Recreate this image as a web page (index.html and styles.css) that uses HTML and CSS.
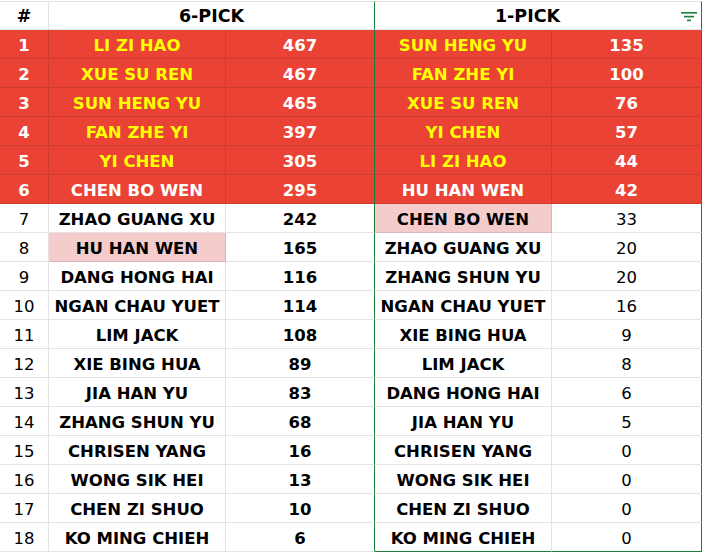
FILE: index.html
```html
<!DOCTYPE html>
<html>
<head>
<meta charset="utf-8">
<link rel="stylesheet" href="styles.css">
</head>
<body>
<div class="sheet">
  <div class="c hd top num">#</div>
  <div class="c hd top span g-right">6-PICK</div>
  <div class="c hd top span g-right pickhd">1-PICK
    <svg class="filter" width="16" height="10" viewBox="0 0 16 10"><rect x="0" y="0" width="16" height="1.6" fill="#188038"/><rect x="3" y="3.8" width="10" height="1.6" fill="#188038"/><rect x="6" y="7.6" width="4" height="1.6" fill="#188038"/></svg>
  </div>

  <div class="c red b num">1</div><div class="c red b y">LI ZI HAO</div><div class="c red b g-right">467</div><div class="c red b y">SUN HENG YU</div><div class="c red b g-right">135</div>
  <div class="c red b num">2</div><div class="c red b y">XUE SU REN</div><div class="c red b g-right">467</div><div class="c red b y">FAN ZHE YI</div><div class="c red b g-right">100</div>
  <div class="c red b num">3</div><div class="c red b y">SUN HENG YU</div><div class="c red b g-right">465</div><div class="c red b y">XUE SU REN</div><div class="c red b g-right">76</div>
  <div class="c red b num">4</div><div class="c red b y">FAN ZHE YI</div><div class="c red b g-right">397</div><div class="c red b y">YI CHEN</div><div class="c red b g-right">57</div>
  <div class="c red b num">5</div><div class="c red b y">YI CHEN</div><div class="c red b g-right">305</div><div class="c red b y">LI ZI HAO</div><div class="c red b g-right">44</div>
  <div class="c red b num">6</div><div class="c red b">CHEN BO WEN</div><div class="c red b g-right">295</div><div class="c red b">HU HAN WEN</div><div class="c red b g-right">42</div>

  <div class="c num">7</div><div class="c b">ZHAO GUANG XU</div><div class="c b g-right">242</div><div class="c b pink">CHEN BO WEN</div><div class="c g-right">33</div>
  <div class="c num">8</div><div class="c b pink">HU HAN WEN</div><div class="c b g-right">165</div><div class="c b">ZHAO GUANG XU</div><div class="c g-right">20</div>
  <div class="c num">9</div><div class="c b">DANG HONG HAI</div><div class="c b g-right">116</div><div class="c b">ZHANG SHUN YU</div><div class="c g-right">20</div>
  <div class="c num">10</div><div class="c b">NGAN CHAU YUET</div><div class="c b g-right">114</div><div class="c b">NGAN CHAU YUET</div><div class="c g-right">16</div>
  <div class="c num">11</div><div class="c b">LIM JACK</div><div class="c b g-right">108</div><div class="c b">XIE BING HUA</div><div class="c g-right">9</div>
  <div class="c num">12</div><div class="c b">XIE BING HUA</div><div class="c b g-right">89</div><div class="c b">LIM JACK</div><div class="c g-right">8</div>
  <div class="c num">13</div><div class="c b">JIA HAN YU</div><div class="c b g-right">83</div><div class="c b">DANG HONG HAI</div><div class="c g-right">6</div>
  <div class="c num">14</div><div class="c b">ZHANG SHUN YU</div><div class="c b g-right">68</div><div class="c b">JIA HAN YU</div><div class="c g-right">5</div>
  <div class="c num">15</div><div class="c b">CHRISEN YANG</div><div class="c b g-right">16</div><div class="c b">CHRISEN YANG</div><div class="c g-right">0</div>
  <div class="c num">16</div><div class="c b">WONG SIK HEI</div><div class="c b g-right">13</div><div class="c b">WONG SIK HEI</div><div class="c g-right">0</div>
  <div class="c num">17</div><div class="c b">CHEN ZI SHUO</div><div class="c b g-right">10</div><div class="c b">CHEN ZI SHUO</div><div class="c g-right">0</div>
  <div class="c num">18</div><div class="c b">KO MING CHIEH</div><div class="c b g-right">6</div><div class="c b g-bottom">KO MING CHIEH</div><div class="c g-right g-bottom">0</div>
</div>
</body>
</html>
```

FILE: styles.css
```css
html, body {
  margin: 0;
  padding: 0;
  background: #ffffff;
}

.sheet {
  margin-top: 1px;
  width: 702px;
  display: grid;
  grid-template-columns: 49px 177px 149px 177px 150px;
  grid-auto-rows: 29px;
  font-family: "DejaVu Sans", sans-serif;
  font-size: 16.5px;
  color: #000;
}

.c {
  box-sizing: border-box;
  border-right: 1px solid rgba(0, 0, 0, 0.11);
  border-bottom: 1px solid rgba(0, 0, 0, 0.11);
  display: flex;
  align-items: center;
  justify-content: center;
  padding-top: 2px;
  white-space: nowrap;
  overflow: hidden;
}

.top {
  border-top: 1px solid rgba(0, 0, 0, 0.11);
}

.hd {
  font-weight: bold;
  font-size: 17.5px;
  padding-top: 0;
}

.span {
  grid-column: span 2;
}

.pickhd {
  position: relative;
  padding-right: 21px;
}

.filter {
  position: absolute;
  right: 4px;
  top: 10px;
}

.b {
  font-weight: bold;
}

.red {
  background: #ea4335;
  color: #ffffff;
}

.y {
  color: #ffff00;
}

.pink {
  background: #f4cccc;
}

.g-right {
  border-right-color: #188038;
}

.g-bottom {
  border-bottom-color: #188038;
}
```
